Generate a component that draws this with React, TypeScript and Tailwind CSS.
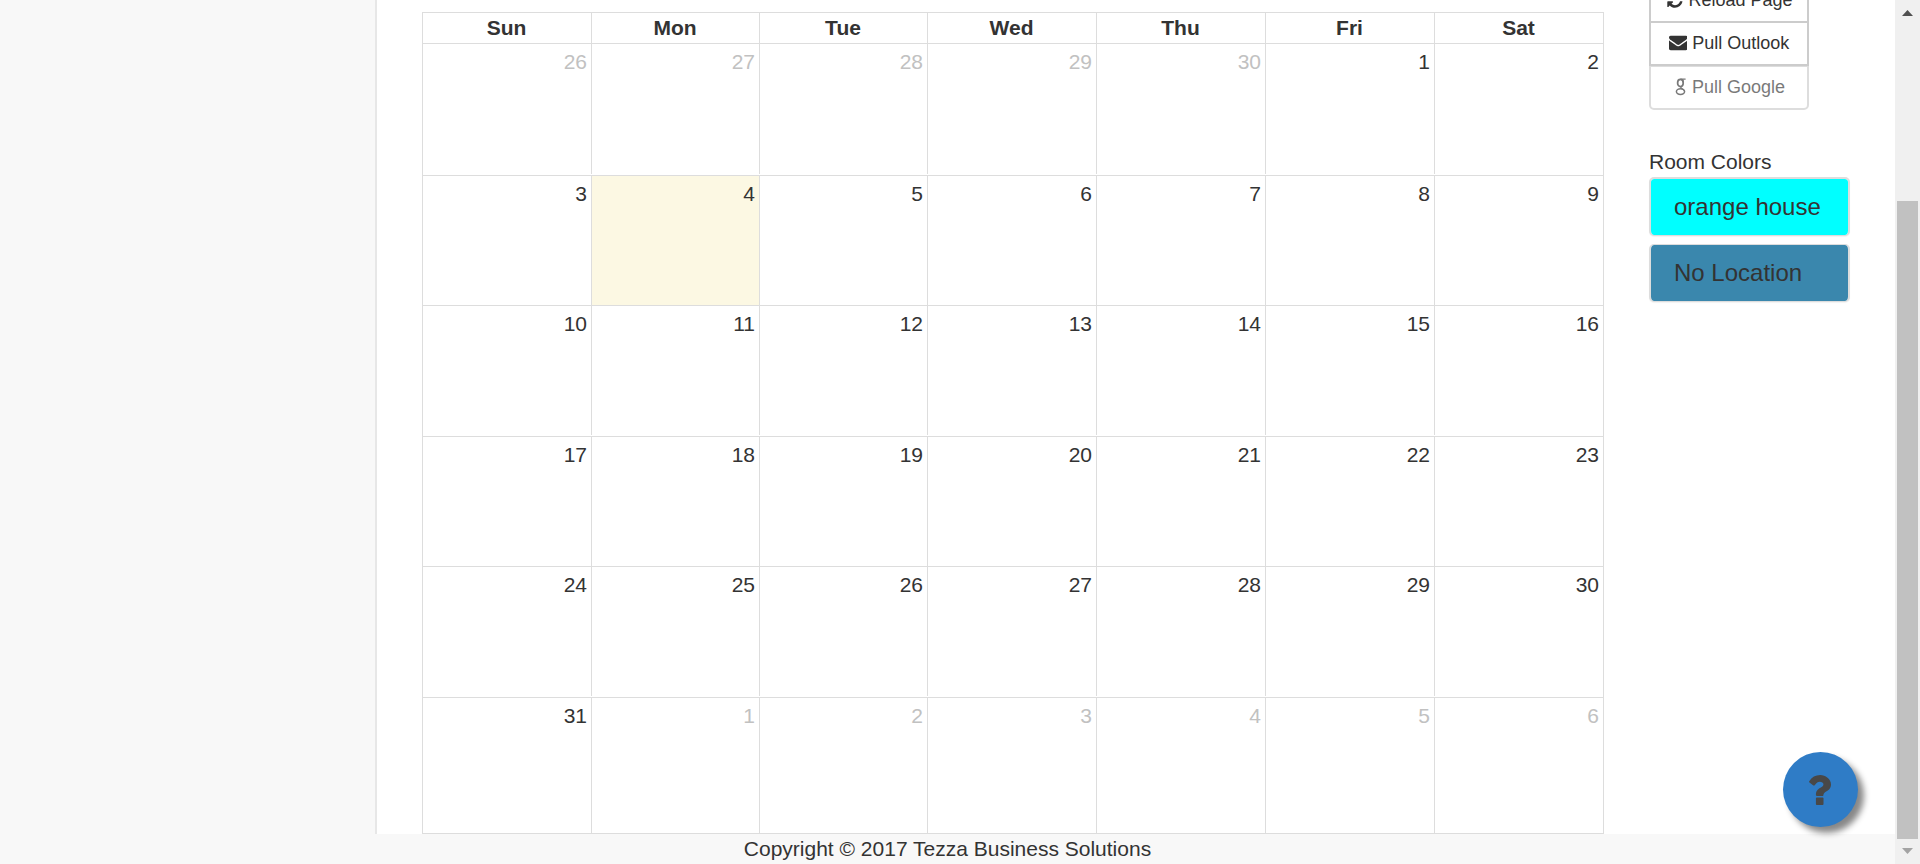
import React from "react";

const weekdays = ["Sun", "Mon", "Tue", "Wed", "Thu", "Fri", "Sat"];

type Week = { days: number[]; height: string; line: string };

const weeks: Week[] = [
  { days: [26, 27, 28, 29, 30, 1, 2], height: "h-[132px]", line: "h-[130px]" },
  { days: [3, 4, 5, 6, 7, 8, 9], height: "h-[130px]", line: "h-full" },
  { days: [10, 11, 12, 13, 14, 15, 16], height: "h-[131px]", line: "h-[129px]" },
  { days: [17, 18, 19, 20, 21, 22, 23], height: "h-[130px]", line: "h-full" },
  { days: [24, 25, 26, 27, 28, 29, 30], height: "h-[131px]", line: "h-[129px]" },
  { days: [31, 1, 2, 3, 4, 5, 6], height: "h-[136px]", line: "h-full" },
];

const columns = "grid grid-cols-[169px_168px_168px_169px_169px_169px_169px]";

function isOutside(week: number, day: number) {
  return (week === 0 && day > 20) || (week === 5 && day < 20);
}

function RefreshIcon() {
  return (
    <svg viewBox="0 0 1792 1792" className="size-[18px] shrink-0 fill-current">
      <path d="M1639 1056q0 5-1 7-64 268-268 434.5t-478 166.5q-146 0-282.5-55t-243.5-157l-129 129q-19 19-45 19t-45-19-19-45v-448q0-26 19-45t45-19h448q26 0 45 19t19 45-19 45l-137 137q71 66 161 102t187 36q134 0 250-65t186-179q11-17 53-117 8-23 30-23h192q13 0 22.5 9.5t9.5 22.5zm25-800v448q0 26-19 45t-45 19h-448q-26 0-45-19t-19-45 19-45l138-138q-148-137-349-137-134 0-250 65t-186 179q-11 17-53 117-8 23-30 23h-199q-13 0-22.5-9.5t-9.5-22.5v-7q65-268 270-434.5t480-166.5q146 0 284 55.5t245 156.5l130-129q19-19 45-19t45 19 19 45z" />
    </svg>
  );
}

function EnvelopeIcon() {
  return (
    <svg viewBox="0 0 1792 1792" className="size-[18.5px] shrink-0 fill-current">
      <path d="M1792 710v794q0 66-47 113t-113 47h-1472q-66 0-113-47t-47-113v-794q44 49 101 87 362 246 497 345 57 42 92.5 65.5t94.5 48 110 24.5h2q51 0 110-24.5t94.5-48 92.5-65.5q170-123 498-345 57-39 100-87zm0-294q0 79-49 151t-122 123q-376 261-468 325-10 7-42.5 31t-54 38.8-52 32.5-57.5 27-50 9h-2q-23 0-50-9t-57.5-27-52-32.5-54-38.8-42.5-31q-91-64-262-182.5t-205-142.5q-62-42-117-115.5t-55-136.5q0-78 41.5-130t118.5-52h1472q65 0 112.5 47t47.5 113z" />
    </svg>
  );
}

function GoogleIcon() {
  return (
    <svg viewBox="0 0 12 18" className="h-[18px] w-3 shrink-0 fill-none stroke-current">
      <ellipse cx="5.4" cy="5" rx="2.8" ry="3.6" strokeWidth="1.7" />
      <path d="M5.4 1.1H10.6M7.2 1.4Q8.6 2.6 8.3 4.5M6.4 8.5Q5 9.6 7 10.8T9.6 13.2" strokeWidth="1.2" />
      <ellipse cx="5.5" cy="13.6" rx="4.1" ry="2.9" strokeWidth="1.5" />
    </svg>
  );
}

function Calendar() {
  return (
    <div className="ml-[45px] mt-3 h-[822px] w-[1182px] border-l border-t border-[#ddd]">
      <div className={`${columns} h-[31px] border-b border-[#ddd]`}>
        {weekdays.map((name) => (
          <div key={name} className="border-r border-[#ddd] pr-px text-center font-bold leading-[30px]">
            {name}
          </div>
        ))}
      </div>
      {weeks.map((week, w) => (
        <div key={w} className={`${columns} ${week.height} border-b border-[#ddd]`}>
          {week.days.map((day, d) => (
            <div
              key={d}
              className={`${d === 6 ? "h-full" : week.line} border-r border-[#ddd] pr-1 pt-[3px] text-right leading-[30px] ${
                w === 1 && d === 1 ? "bg-[#fcf8e3]" : ""
              } ${isOutside(w, day) ? "text-[#c1c1c1]" : ""}`}
            >
              {day}
            </div>
          ))}
        </div>
      ))}
    </div>
  );
}

function SidePanel() {
  return (
    <aside className="ml-[45px] w-[201px]">
      <div className="-mt-[22px] flex w-[160px] flex-col text-lg">
        <button className="flex h-[45px] items-center justify-center gap-1 border-2 border-[#ccc] bg-white pb-0.5 pl-px">
          <RefreshIcon />
          Reload Page
        </button>
        <button className="-mt-0.5 flex h-[45px] items-center justify-center gap-[5px] border-2 border-[#ccc] bg-white pb-0.5">
          <EnvelopeIcon />
          Pull Outlook
        </button>
        <button className="-mt-px flex h-[45px] items-center justify-center gap-[5px] rounded-b-[5px] border-2 border-[#ccc] bg-white pb-0.5 pl-0.5 opacity-65">
          <GoogleIcon />
          Pull Google
        </button>
      </div>
      <h4 className="mt-[37px] leading-[30px]">Room Colors</h4>
      <div className="flex flex-col gap-2 text-2xl">
        <div className="h-[59px] rounded-[5px] border-2 border-b-[1px] border-[#ddd] bg-[#00ffff] bg-clip-padding pl-[23px] leading-[55px] shadow-[0_1px_1px_rgba(0,0,0,0.05)]">
          orange house
        </div>
        <div className="h-[58px] rounded-[5px] border-2 border-y border-[#ddd] bg-[#3a87ad] bg-clip-padding pl-[23px] leading-[55px] shadow-[0_1px_1px_rgba(0,0,0,0.05)]">
          No Location
        </div>
      </div>
    </aside>
  );
}

function Scrollbar() {
  return (
    <div className="flex w-[25px] shrink-0 flex-col items-center bg-[#f0f0f0]">
      <svg viewBox="0 0 11 6" className="mt-[10px] h-1.5 w-[11px] fill-[#505050]">
        <path d="M5.5 0L11 6H0z" />
      </svg>
      <div className="mt-[185px] h-[638px] w-[21px] shrink-0 bg-[#c1c1c1]" />
      <svg viewBox="0 0 11 6" className="mt-[9px] h-1.5 w-[11px] fill-[#a3a3a3]">
        <path d="M0 0h11L5.5 6z" />
      </svg>
    </div>
  );
}

export default function App() {
  return (
    <div className="relative flex h-[864px] w-full overflow-hidden bg-[#f8f8f8] font-['Liberation_Sans',Arial,sans-serif] text-[21px] text-[#333]">
      <div className="flex w-[1895px] shrink-0 flex-col">
        <div className="flex h-[834px]">
          <nav className="w-[375px] shrink-0" />
          <main className="flex flex-1 border-l-2 border-[#e7e7e7] bg-white">
            <Calendar />
            <SidePanel />
          </main>
        </div>
        <footer className="text-center leading-[30px]">Copyright © 2017 Tezza Business Solutions</footer>
      </div>
      <Scrollbar />
      <button
        aria-label="Help"
        className="absolute left-[1783px] top-[752px] flex size-[75px] items-center justify-center rounded-full bg-[#2f7cc6] shadow-[6px_6px_6px_#888]"
      >
        <svg viewBox="476 256 928 1280" preserveAspectRatio="none" className="ml-[-2px] h-[30px] w-[22px] fill-[#484848]">
          <path d="M1088 1256v240q0 16-12 28t-28 12h-240q-16 0-28-12t-12-28v-240q0-16 12-28t28-12h240q16 0 28 12t12 28zm316-600q0 54-15.5 101t-35 76.5-55 59.5-57.5 43.5-61 35.5q-41 23-68.5 65t-27.5 67q0 17-12 32.5t-28 15.5h-240q-15 0-25.5-18.5t-10.5-37.5v-45q0-83 65-156.5t143-108.5q59-27 84-56t25-76q0-42-46.5-74t-107.5-32q-65 0-108 29-35 25-107 115-13 16-31 16-12 0-25-8l-164-125q-13-10-15.5-25t5.5-28q160-266 464-266 80 0 161 31t146 83 106 127.5 41 158.5z" />
        </svg>
      </button>
    </div>
  );
}
